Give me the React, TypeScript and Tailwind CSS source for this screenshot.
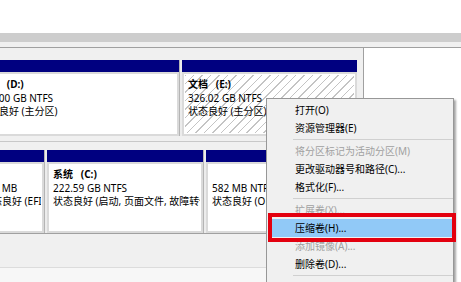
import React from "react";

const font = { fontFamily: '"Noto Sans", "Noto Sans CJK SC", sans-serif' };

function Part({
  w,
  lines,
  hatched,
}: {
  w: number;
  lines: { t: string; b?: boolean }[];
  hatched?: boolean;
}) {
  return (
    <div className="flex flex-col shrink-0" style={{ width: w }}>
      <div className="h-[12px] bg-[#000080]" />
      <div className="flex-1 border-2 border-[#dadada] bg-white p-[1px]">
        <div
          className={
            "h-full overflow-hidden whitespace-pre pl-[3px] pt-[3px] text-[10px] leading-[13.5px] text-black " +
            (hatched
              ? "bg-[repeating-linear-gradient(135deg,#c4c4c4_0px,#c4c4c4_1px,#ffffff_1px,#ffffff_6px)]"
              : "bg-white")
          }
        >
          {lines.map((l, i) => (
            <div key={i} className={l.b ? "font-bold" : ""}>
              {l.t || "\u00a0"}
            </div>
          ))}
        </div>
      </div>
    </div>
  );
}

function Divider() {
  return (
    <div className="w-[3px] shrink-0 flex">
      <div className="w-[1px] bg-[#b4b4b4]" />
      <div className="flex-1 bg-[#ececec]" />
    </div>
  );
}

type Item = { t: string; d?: boolean; sep?: boolean; hi?: boolean };

const items: Item[] = [
  { t: "打开(O)" },
  { t: "资源管理器(E)" },
  { t: "", sep: true },
  { t: "将分区标记为活动分区(M)", d: true },
  { t: "更改驱动器号和路径(C)..." },
  { t: "格式化(F)..." },
  { t: "", sep: true },
  { t: "扩展卷(X)...", d: true },
  { t: "压缩卷(H)...", hi: true },
  { t: "添加镜像(A)...", d: true },
  { t: "删除卷(D)..." },
  { t: "", sep: true },
  { t: "属性(P)" },
];

export default function App() {
  return (
    <div
      className="relative w-[461px] h-[282px] overflow-hidden bg-white"
      style={font}
    >
      {/* top white area */}
      <div className="h-[33px] bg-white" />
      {/* scrollbar band */}
      <div className="h-[9px] bg-[#cdcdcd]" />
      <div className="h-[5px] bg-[#f0f0f0]" />
      <div className="h-[1px] bg-[#a0a0a0]" />

      {/* disk area */}
      <div className="flex">
        <div className="w-[364px] shrink-0 bg-[#f0f0f0] border-r border-[#a0a0a0]">
          {/* disk 1 */}
          <div className="pt-[12px] pb-[5px] border-b border-[#c8c8c8]">
            <div className="flex h-[76px] ml-[-27px]">
              <Part
                w={206}
                lines={[
                  { t: "软件   (D:)", b: true },
                  { t: "200.00 GB NTFS" },
                  { t: "状态良好 (主分区)" },
                ]}
              />
              <Divider />
              <Part
                w={175}
                hatched
                lines={[
                  { t: "文档   (E:)", b: true },
                  { t: "326.02 GB NTFS" },
                  { t: "状态良好 (主分区)" },
                ]}
              />
            </div>
          </div>
          {/* disk 0 */}
          <div className="pt-[8px] border-b border-[#a0a0a0]">
            <div className="flex h-[83px] ml-[-24px]">
              <Part
                w={68}
                lines={[
                  { t: "" },
                  { t: "100 MB" },
                  { t: "状态良好 (EFI 系统分区)" },
                ]}
              />
              <Divider />
              <Part
                w={156}
                lines={[
                  { t: "系统   (C:)", b: true },
                  { t: "222.59 GB NTFS" },
                  { t: "状态良好 (启动, 页面文件, 故障转储, 主分区)" },
                ]}
              />
              <Divider />
              <Part
                w={154}
                lines={[
                  { t: "" },
                  { t: "582 MB NTFS" },
                  { t: "状态良好 (OEM 分区)" },
                ]}
              />
            </div>
          </div>
          <div className="h-[34px] bg-[#f0f0f0] border-b border-[#dcdcdc]" />
          <div className="h-[20px] bg-[#f7f7f7]" />
        </div>
        <div className="flex-1 bg-white" />
      </div>

      {/* context menu */}
      <div className="absolute left-[266px] top-[98px] w-[188px] h-[200px] bg-[#f0f0f0] border border-[#979797] shadow-[2px_2px_2px_rgba(0,0,0,0.35)] pt-[2px] text-[10px]">
        {items.map((it, i) =>
          it.sep ? (
            <div key={i} className="h-[5px] flex items-center pl-[26px]">
              <div className="h-[1px] w-full bg-[#d0d0d0]" />
            </div>
          ) : (
            <div
              key={i}
              className={
                "h-[18px] flex items-center ml-[5px] mr-[1px] pl-[23px] " +
                (it.hi ? "bg-[#91c9f7] " : "") +
                (it.d ? "text-[#a0a0a0]" : "text-black")
              }
            >
              {it.t}
            </div>
          )
        )}
      </div>

      {/* red highlight frame */}
      <div className="absolute left-[268px] top-[213px] w-[188px] h-[29px] border-[4px] border-[#e3000f]" />
    </div>
  );
}
